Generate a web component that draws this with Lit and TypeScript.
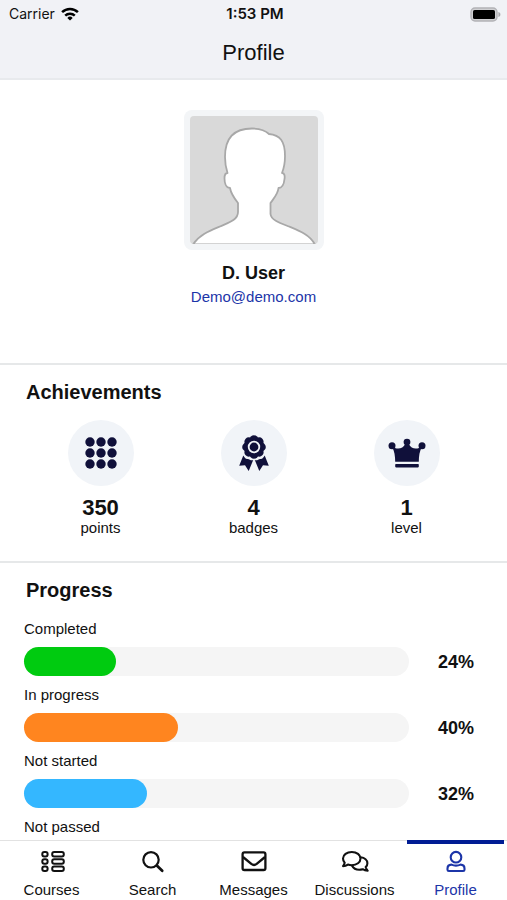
import { LitElement, html, css, svg, nothing } from "lit";
import { customElement } from "lit/decorators.js";
import { classMap } from "lit/directives/class-map.js";

const wifiIcon = html`<svg class="wifi" viewBox="0 0 18 14" aria-hidden="true">
  <path d="M9 13.6 6.3 10.9a3.9 3.9 0 0 1 5.4 0z" fill="currentColor" />
  <path d="M4.200 8.600a6.900 6.900 0 0 1 9.600 0" fill="none" stroke="currentColor" stroke-width="2.500" />
  <path d="M1.100 5.200a11.300 11.300 0 0 1 15.800 0" fill="none" stroke="currentColor" stroke-width="2.500" />
</svg>`;

const batteryIcon = html`<svg class="battery" viewBox="0 0 31 15" aria-hidden="true">
  <rect x="1" y="1" width="26" height="13" rx="4" fill="#d0d0d3" stroke="#b2b2b6" stroke-width="1.4" />
  <rect x="3" y="3" width="22" height="9" rx="1.6" fill="#000" />
  <path d="M28.4 5c1.6.6 2 1.5 2 2.5s-.4 1.9-2 2.5z" fill="#a9a9ad" />
</svg>`;

const avatar = html`<svg class="avatar" viewBox="0 0 128 128" role="img" aria-label="User photo">
  <rect width="128" height="128" fill="#d9d9d9" />
  <path
    d="M3 128.500C9 119 19 115 30 110.500C39 106.500 48 104 48 96V87C44 82 41 78 40 72C36 72 34.500 67 34.500 62.500C34.500 58.500 35.500 57 37.500 57C35.500 51 35 46 35 41C35 22 44 12.500 62 12.500C70 12.500 75 14 79 18C90 19 95 25 95 40C95 46 94 52 92 57C94.500 57 95 60 94.500 63C94 68 92.500 72 88.500 72C88 78 84 82 80.500 87V98C81 104 90 107 99 110.500C110 115 120 119 125 128.500Z"
    fill="#fff" stroke="#a8a8a8" stroke-width="1.8" stroke-linejoin="round" />
</svg>`;

const pointsIcon = html`<svg class="medal" viewBox="0 0 40 40" fill="currentColor" aria-hidden="true">
  ${[9, 20, 31].map((y) => [9, 20, 31].map((x) => svg`<circle cx=${x} cy=${y} r="4.7" />`))}
</svg>`;

const badgeIcon = html`<svg class="medal" viewBox="0 0 40 40" fill="currentColor" aria-hidden="true">
  <circle cx="20" cy="14" r="10" />
  ${[0, 45, 90, 135, 180, 225, 270, 315].map(
    (a) => svg`<circle cx="20" cy="6.6" r="4.4" transform="rotate(${a} 20 14)" />`
  )}
  <circle cx="20" cy="14" r="5.3" fill="none" stroke="#f1f4f8" stroke-width="1.8" />
  <path d="M9.300 22.500 5.200 32.800 11 32.300 14.700 38 19.200 27C17 28.200 15.500 25.800 13.500 26 11 26 10.500 24 9.300 22.500Z" />
  <path d="M30.700 22.500 34.800 32.800 29 32.300 25.300 38 20.800 27C23 28.200 24.500 25.800 26.500 26 29 26 29.500 24 30.700 22.500Z" />
</svg>`;

const crownIcon = html`<svg class="medal" viewBox="0 0 40 40" fill="currentColor" aria-hidden="true">
  <circle cx="5" cy="12.8" r="3.5" />
  <circle cx="20" cy="9.1" r="3.4" />
  <circle cx="35" cy="12.8" r="3.5" />
  <path d="M5 13.500C9 16.200 15.500 17 18.200 11H21.800C24.500 17 31 16.200 35 13.500C32.500 18.500 31.800 23 31.800 28.800H8.200C8.200 23 7.500 18.500 5 13.500Z" />
  <rect x="8.2" y="31" width="23.6" height="3.4" rx=".8" />
</svg>`;

const coursesIcon = html`<svg class="glyph" viewBox="0 0 28 24" fill="none" stroke="currentColor" stroke-width="2" aria-hidden="true">
  ${[3, 10.2, 17.4].map(
    (y) => svg`<rect x="4.3" y=${y} width="5.3" height="4.6" rx="2" /><rect x="14.2" y=${y} width="11.6" height="4.6" rx="2" />`
  )}
</svg>`;

const searchIcon = html`<svg class="glyph" viewBox="0 0 28 24" fill="none" stroke="currentColor" stroke-width="2.2" aria-hidden="true">
  <circle cx="12" cy="10.8" r="7.7" />
  <path d="m17.800 16.600 5.400 5.200" stroke-width="2.800" stroke-linecap="round" />
</svg>`;

const messagesIcon = html`<svg class="glyph" viewBox="0 0 28 24" fill="none" stroke="currentColor" stroke-width="2.3" stroke-linejoin="round" aria-hidden="true">
  <rect x="2.600" y="3.400" width="22.800" height="17.600" rx="1.800" />
  <path d="M3 8 11.300 14.900c1.800 1.400 3.600 1.400 5.400 0L25 8" />
</svg>`;

const discussionsIcon = html`<svg class="glyph" viewBox="0 0 28 24" fill="none" stroke="currentColor" stroke-width="2.1" stroke-linejoin="round" stroke-linecap="round" aria-hidden="true">
  <path d="M10.800 3c5 0 8.700 2.900 8.700 6.600s-3.700 6.600-8.700 6.600c-1.400 0-2.700-.2-3.900-.6C5.500 16.600 3.900 17.100 2 17.100c.9-1 1.500-2.200 1.700-3.400C2.600 12.500 2 11.100 2 9.600c0-3.700 3.800-6.600 8.800-6.600Z" />
  <path d="M19.700 8.200c3.900.5 6.700 3 6.700 6.100 0 1.500-.6 2.800-1.700 3.800.3 1.200.8 2.300 1.900 3.600-1.700-.1-3.500-.6-4.900-1.500-1.100.3-2.300.5-3.500.5-3.200 0-5.800-1.400-7.100-4" />
</svg>`;

const profileIcon = html`<svg class="glyph" viewBox="0 0 28 24" fill="none" stroke="currentColor" stroke-width="2.1" stroke-linejoin="round" aria-hidden="true">
  <circle cx="14" cy="8.200" r="5.300" />
  <path d="M9.500 15.600c1.500.7 3 1 4.500 1s3-.3 4.500-1c2.400.1 4 1.800 4 3.900v1.200c0 .8-.6 1.300-1.400 1.300H6.900c-.8 0-1.400-.5-1.400-1.300v-1.200c0-2.100 1.600-3.800 4-3.900Z" />
</svg>`;

const achievements = [
  { icon: pointsIcon, value: 350, label: "points" },
  { icon: badgeIcon, value: 4, label: "badges" },
  { icon: crownIcon, value: 1, label: "level" },
];

const progress: { label: string; value?: number; tone: string }[] = [
  { label: "Completed", value: 24, tone: "green" },
  { label: "In progress", value: 40, tone: "orange" },
  { label: "Not started", value: 32, tone: "blue" },
  { label: "Not passed", tone: "grey" },
];

const tabs = [
  { label: "Courses", icon: coursesIcon },
  { label: "Search", icon: searchIcon },
  { label: "Messages", icon: messagesIcon },
  { label: "Discussions", icon: discussionsIcon },
  { label: "Profile", icon: profileIcon, active: true },
];

@customElement("app-root")
export class AppRoot extends LitElement {
  static styles = css`
    :host {
      display: flex;
      flex-direction: column;
      height: 100vh;
      background: #fff;
      color: #111;
      font: 15px/18px "Liberation Sans", Arial, sans-serif;
    }
    * {
      box-sizing: border-box;
    }
    h1, h2 {
      margin: 0;
    }
    svg {
      display: block;
    }
    .top {
      flex: none;
      background: #f1f2f6;
      border-bottom: 2px solid #e8eaed;
    }
    .status {
      display: grid;
      grid-template-columns: 1fr auto 1fr;
      align-items: center;
      height: 28px;
      padding: 0 6px 0 9px;
      font-family: Inter, sans-serif;
      font-size: 14px;
    }
    .carrier {
      display: flex;
      align-items: center;
      gap: 6px;
    }
    .clock {
      font-size: 15px;
      font-weight: 600;
    }
    .wifi {
      width: 18px;
      height: 14px;
      color: #000;
    }
    .battery {
      justify-self: end;
      width: 31px;
      height: 15px;
    }
    .title {
      padding: 11px 0;
      font-size: 22px;
      line-height: 28px;
      font-weight: 400;
      text-align: center;
    }
    .content {
      flex: 1;
      min-height: 0;
      overflow-y: auto;
      scrollbar-width: none;
    }
    .user {
      display: flex;
      flex-direction: column;
      align-items: center;
      padding: 30px 0 57px;
    }
    .frame {
      padding: 6px;
      border-radius: 8px;
      background: #f3f5f7;
    }
    .avatar {
      width: 128px;
      height: 128px;
      border-radius: 4px;
    }
    .name {
      margin-top: 12px;
      font-size: 18px;
      line-height: 22px;
    }
    .mail {
      margin-top: 4px;
      color: #1c35a8;
      text-decoration: none;
    }
    .section {
      border-top: 2px solid #e6e8e9;
      padding-top: 15px;
    }
    .heading {
      padding: 0 26px;
      font-size: 20px;
      line-height: 24px;
    }
    .medals {
      display: grid;
      grid-template-columns: repeat(3, 1fr);
      padding: 16px 24px 24px;
    }
    .achievement {
      display: flex;
      flex-direction: column;
      align-items: center;
    }
    .disc {
      display: grid;
      place-items: center;
      width: 66px;
      height: 66px;
      border-radius: 50%;
      background: #f1f4f8;
      color: #10103a;
    }
    .medal {
      width: 40px;
      height: 40px;
    }
    .count {
      margin-top: 11px;
      font-size: 22px;
      line-height: 22px;
      font-weight: 700;
    }
    .rows {
      padding: 18px 4px 4px 24px;
    }
    .row {
      display: grid;
      grid-template-columns: 1fr 94px;
      row-gap: 9px;
      padding-bottom: 10px;
      align-items: center;
    }
    .row-label {
      grid-column: 1 / -1;
    }
    .track {
      height: 29px;
      border-radius: 15px;
      background: #f5f5f5;
    }
    .fill {
      height: 29px;
      border-radius: 15px;
    }
    .green {
      background: #00cb10;
    }
    .orange {
      background: #ff851f;
    }
    .blue {
      background: #34b7ff;
    }
    .percent {
      font-size: 18px;
      font-weight: 700;
      text-align: center;
    }
    .tabs {
      display: grid;
      grid-template-columns: repeat(5, 1fr);
      flex: none;
      padding: 0 1px;
      border-top: 1px solid #e2e2e2;
      background: #fff;
    }
    .tab {
      display: flex;
      flex-direction: column;
      align-items: center;
      gap: 8px;
      margin: -1px 2px 0;
      padding: 5px 0 1px;
      border-top: 4px solid transparent;
      color: inherit;
      text-decoration: none;
    }
    .active {
      border-color: #001c94;
      color: #1c35a8;
    }
    .glyph {
      width: 28px;
      height: 24px;
    }
  `;

  render() {
    return html`
      <header class="top">
        <div class="status">
          <span class="carrier">Carrier ${wifiIcon}</span>
          <span class="clock">1:53 PM</span>
          ${batteryIcon}
        </div>
        <h1 class="title">Profile</h1>
      </header>
      <main class="content">
        <div class="user">
          <div class="frame">${avatar}</div>
          <h2 class="name">D. User</h2>
          <a class="mail" href="mailto:Demo@demo.com">Demo@demo.com</a>
        </div>
        <section class="section">
          <h2 class="heading">Achievements</h2>
          <div class="medals">
            ${achievements.map(
              (a) => html`<div class="achievement">
                <div class="disc">${a.icon}</div>
                <span class="count">${a.value}</span>
                <span>${a.label}</span>
              </div>`
            )}
          </div>
        </section>
        <section class="section">
          <h2 class="heading">Progress</h2>
          <div class="rows">
            ${progress.map(
              (p) => html`<div class="row">
                <span class="row-label">${p.label}</span>
                ${p.value === undefined
                  ? nothing
                  : html`<div class="track" role="progressbar" aria-label=${p.label} aria-valuenow=${p.value}>
                        <div class=${classMap({ fill: true, [p.tone]: true })} style="width: ${p.value}%"></div>
                      </div>
                      <span class="percent">${p.value}%</span>`}
              </div>`
            )}
          </div>
        </section>
      </main>
      <nav class="tabs">
        ${tabs.map(
          (t) => html`<a href="#" class=${classMap({ tab: true, active: !!t.active })}>${t.icon}<span>${t.label}</span></a>`
        )}
      </nav>
    `;
  }
}
